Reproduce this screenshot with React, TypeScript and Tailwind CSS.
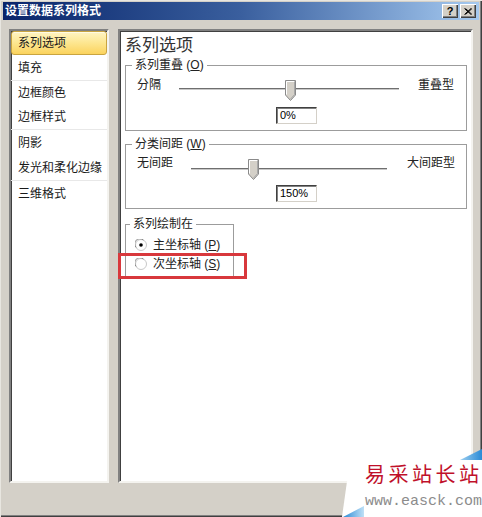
import React from "react";

const navItems: { label: string; h: string; sepAfter?: boolean; selected?: boolean }[] = [
  { label: "系列选项", h: "h-[24px]", selected: true },
  { label: "填充", h: "h-[25px]", sepAfter: true },
  { label: "边框颜色", h: "h-[24px]" },
  { label: "边框样式", h: "h-[24px]", sepAfter: true },
  { label: "阴影", h: "h-[25px]" },
  { label: "发光和柔化边缘", h: "h-[25px]", sepAfter: true },
  { label: "三维格式", h: "h-[25px]" },
];

function Thumb() {
  return (
    <svg width="11" height="21" viewBox="0 0 11 21" className="block">
      <polygon points="0.5,0.5 10.5,0.5 10.5,15 5.5,20.5 0.5,15" fill="#d4d0c8" stroke="#8a8a8a" />
      <polyline points="1.5,14.5 1.5,1.5 9.5,1.5" fill="none" stroke="#ffffff" />
      <polyline points="9.5,1.5 9.5,14.6 5.5,19" fill="none" stroke="#a8a8a8" />
    </svg>
  );
}

function Slider({ width, thumbLeft, trackTop }: { width: string; thumbLeft: string; trackTop: string }) {
  return (
    <div className={`relative h-[27px] ${width}`}>
      <div className={`absolute left-0 right-0 ${trackTop} h-[2px] border-t border-t-[#6f6f6f] border-b border-b-[#c8c8c8]`} />
      <div className={`absolute top-[7px] ${thumbLeft}`}>
        <Thumb />
      </div>
    </div>
  );
}

function ValueBox({ value }: { value: string }) {
  return (
    <div className="ml-[150px] w-[41px] h-[17px] bg-white border border-t-[#404040] border-l-[#404040] border-r-[#d4d0c8] border-b-[#d4d0c8] shadow-[inset_1px_1px_0_#808080] pl-[3px] text-[11px] leading-[15px] text-black">
      {value}
    </div>
  );
}

function Radio({ checked }: { checked?: boolean }) {
  return (
    <svg width="12" height="12" viewBox="0 0 12 12" className="block shrink-0">
      <circle cx="6" cy="6" r="5.5" fill="#ffffff" stroke="#c8c8c8" />
      <path d="M1.2 8.5 A5 5 0 0 1 8.5 1.2" fill="none" stroke="#8a8a8a" />
      {checked && <circle cx="6" cy="6" r="1.8" fill="#000000" />}
    </svg>
  );
}

export default function App() {
  return (
    <div className="relative w-[482px] h-[517px] overflow-hidden bg-[#d4d0c8] flex flex-col pt-[2px] px-[3px] font-['Liberation_Sans','Noto_Sans_CJK_SC',sans-serif] shadow-[inset_1px_1px_0_#e8e6e0,inset_-1px_-1px_0_#404040,inset_-2px_-2px_0_#808080]">
      {/* title bar */}
      <div className="h-[18px] flex items-center bg-linear-to-r from-[#0a246a] via-[#3a5f9e] to-[#a6caf0] pl-[2px] pr-[3px]">
        <span className="text-white font-bold text-[12px] leading-[16px]">设置数据系列格式</span>
        <div className="ml-auto flex gap-[2px]">
          <div className="w-[16px] h-[14px] bg-[#d4d0c8] flex items-center justify-center shadow-[inset_1px_1px_0_#fff,inset_-1px_-1px_0_#404040,inset_-2px_-2px_0_#808080] text-[11px] font-bold leading-none text-black">
            ?
          </div>
          <div className="w-[16px] h-[14px] bg-[#d4d0c8] flex items-center justify-center shadow-[inset_1px_1px_0_#fff,inset_-1px_-1px_0_#404040,inset_-2px_-2px_0_#808080]">
            <svg width="8" height="7" viewBox="0 0 8 7">
              <path d="M0.5 0.5 L7 6.5 M1.5 0.5 L8 6.5 M7 0.5 L0.5 6.5 M8 0.5 L1.5 6.5" stroke="#000" strokeWidth="1" />
            </svg>
          </div>
        </div>
      </div>

      {/* body */}
      <div className="flex gap-[9px] pl-[6px] mt-[9px]">
        {/* left nav */}
        <div className="w-[100px] h-[454px] bg-white border-2 border-t-[#808080] border-l-[#808080] border-r-[#f4f3ef] border-b-[#f4f3ef] shadow-[inset_1px_1px_0_#404040]">
          {navItems.map((item) => (
            <React.Fragment key={item.label}>
              {item.selected ? (
                <div className={`${item.h} flex items-center pl-[6px] rounded-[3px] border border-[#c9a440] bg-linear-to-b from-[#fff4c2] via-[#fde68f] to-[#fbd35c] shadow-[inset_0_1px_0_#fffbe6] text-[12px] text-[#1a1a1a]`}>
                  {item.label}
                </div>
              ) : (
                <div className={`${item.h} flex items-center pl-[7px] text-[12px] text-[#1a1a1a]`}>{item.label}</div>
              )}
              {item.sepAfter && <div className="h-px bg-[#e8e8e8]" />}
            </React.Fragment>
          ))}
        </div>

        {/* right content */}
        <div className="w-[355px] h-[454px] bg-white border-2 border-t-[#808080] border-l-[#808080] border-r-[#f4f3ef] border-b-[#f4f3ef] shadow-[inset_1px_1px_0_#404040] pl-[5px] flex flex-col">
          <div className="mt-[5px] text-[17px] leading-[20px] text-[#333]">系列选项</div>

          <fieldset className="mt-[1px] w-[342px] border border-[#9c9c9c] pb-[6px]">
            <legend className="ml-[6px] px-[3px] text-[12px] leading-[16px] text-[#222]">
              系列重叠 (<span className="underline">O</span>)
            </legend>
            <div className="flex h-[27px]">
              <div className="w-[53px] pl-[11px] pt-[4px] text-[12px] leading-[16px] text-[#222]">分隔</div>
              <Slider width="w-[220px]" thumbLeft="left-[106px]" trackTop="top-[15px]" />
              <div className="ml-[19px] pt-[4px] text-[12px] leading-[16px] text-[#222]">重叠型</div>
            </div>
            <div className="mt-[7px]">
              <ValueBox value="0%" />
            </div>
          </fieldset>

          <fieldset className="mt-[5px] w-[342px] border border-[#9c9c9c] pb-[6px]">
            <legend className="ml-[6px] px-[3px] text-[12px] leading-[16px] text-[#222]">
              分类间距 (<span className="underline">W</span>)
            </legend>
            <div className="flex h-[27px]">
              <div className="w-[65px] pl-[11px] pt-[3px] text-[12px] leading-[16px] text-[#222]">无间距</div>
              <Slider width="w-[196px]" thumbLeft="left-[57px]" trackTop="top-[16px]" />
              <div className="ml-[20px] pt-[3px] text-[12px] leading-[16px] text-[#222]">大间距型</div>
            </div>
            <div className="mt-[6px]">
              <ValueBox value="150%" />
            </div>
          </fieldset>

          <fieldset className="mt-[7px] w-[109px] border border-[#9c9c9c] pt-[3px] pb-[3px]">
            <legend className="ml-[4px] px-[3px] text-[12px] leading-[16px] text-[#222]">系列绘制在</legend>
            <div className="h-[19px] flex items-center gap-[6px] pl-[9px] text-[12px] text-[#222]">
              <Radio checked />
              <span>
                主坐标轴 (<span className="underline">P</span>)
              </span>
            </div>
            <div className="h-[19px] flex items-center gap-[6px] pl-[9px] text-[12px] text-[#222]">
              <Radio />
              <span>
                次坐标轴 (<span className="underline">S</span>)
              </span>
            </div>
          </fieldset>
        </div>
      </div>

      {/* red annotation box */}
      <div className="absolute left-[118px] top-[253px] w-[129px] h-[26px] border-[3px] border-[#d8383c]" />

      {/* watermark */}
      <div className="absolute left-[340px] top-[446px] w-[142px] h-[71px]">
        <svg width="142" height="71" viewBox="0 0 142 71" className="absolute inset-0">
          <defs>
            <linearGradient id="bl" x1="0" y1="0" x2="1" y2="0">
              <stop offset="0" stopColor="#2a8ad6" />
              <stop offset="1" stopColor="#bfe0f6" />
            </linearGradient>
            <linearGradient id="tr" x1="0" y1="0" x2="1" y2="0">
              <stop offset="0" stopColor="#9fd0f0" />
              <stop offset="1" stopColor="#2a8ad6" />
            </linearGradient>
          </defs>
          <polygon points="10,14 142,14 142,71 2,71" fill="#ffffff" />
          <polygon points="120,14 142,3 142,14" fill="url(#tr)" />
          <polygon points="3,71 24,60 24,71" fill="url(#bl)" />
        </svg>
        <div className="relative flex flex-col pl-[25px] pt-[17px]">
          <div className="text-[20px] leading-[22px] tracking-[3.5px] text-[#c0102a] whitespace-nowrap font-['Noto_Sans_CJK_SC',sans-serif]">
            易采站长站
          </div>
          <div className="mt-[10px] text-[15px] leading-[14px] text-[#8c8c8c] whitespace-nowrap font-['Liberation_Mono',monospace]">
            www.easck.com
          </div>
        </div>
      </div>
    </div>
  );
}
